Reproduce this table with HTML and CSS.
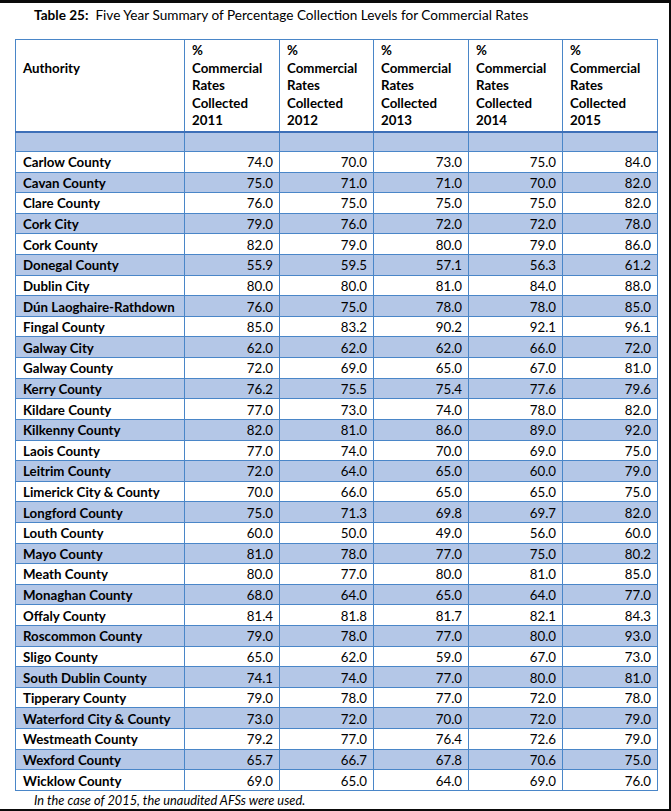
FILE: index.html
```html
<!DOCTYPE html>
<html>
<head>
<meta charset="utf-8">
<link rel="stylesheet" href="styles.css">
</head>
<body>
<div class="page">
  <div class="caption"><b>Table 25:</b>&nbsp; Five Year Summary of Percentage Collection Levels for Commercial Rates</div>
  <table class="rates">
    <colgroup>
      <col class="c-auth"><col class="c-num"><col class="c-num2"><col class="c-num"><col class="c-num2"><col class="c-num">
    </colgroup>
    <thead>
      <tr class="head">
        <th class="auth-h">Authority</th>
        <th>%<br>Commercial<br>Rates<br>Collected<br>2011</th>
        <th>%<br>Commercial<br>Rates<br>Collected<br>2012</th>
        <th>%<br>Commercial<br>Rates<br>Collected<br>2013</th>
        <th>%<br>Commercial<br>Rates<br>Collected<br>2014</th>
        <th>%<br>Commercial<br>Rates<br>Collected<br>2015</th>
      </tr>
    </thead>
    <tbody>
      <tr class="blank alt"><td></td><td></td><td></td><td></td><td></td><td></td></tr>
      <tr><td>Carlow County</td><td>74.0</td><td>70.0</td><td>73.0</td><td>75.0</td><td>84.0</td></tr>
      <tr class="alt"><td>Cavan County</td><td>75.0</td><td>71.0</td><td>71.0</td><td>70.0</td><td>82.0</td></tr>
      <tr><td>Clare County</td><td>76.0</td><td>75.0</td><td>75.0</td><td>75.0</td><td>82.0</td></tr>
      <tr class="alt"><td>Cork City</td><td>79.0</td><td>76.0</td><td>72.0</td><td>72.0</td><td>78.0</td></tr>
      <tr><td>Cork County</td><td>82.0</td><td>79.0</td><td>80.0</td><td>79.0</td><td>86.0</td></tr>
      <tr class="alt"><td>Donegal County</td><td>55.9</td><td>59.5</td><td>57.1</td><td>56.3</td><td>61.2</td></tr>
      <tr><td>Dublin City</td><td>80.0</td><td>80.0</td><td>81.0</td><td>84.0</td><td>88.0</td></tr>
      <tr class="alt"><td>Dún Laoghaire-Rathdown</td><td>76.0</td><td>75.0</td><td>78.0</td><td>78.0</td><td>85.0</td></tr>
      <tr><td>Fingal County</td><td>85.0</td><td>83.2</td><td>90.2</td><td>92.1</td><td>96.1</td></tr>
      <tr class="alt"><td>Galway City</td><td>62.0</td><td>62.0</td><td>62.0</td><td>66.0</td><td>72.0</td></tr>
      <tr><td>Galway County</td><td>72.0</td><td>69.0</td><td>65.0</td><td>67.0</td><td>81.0</td></tr>
      <tr class="alt"><td>Kerry County</td><td>76.2</td><td>75.5</td><td>75.4</td><td>77.6</td><td>79.6</td></tr>
      <tr><td>Kildare County</td><td>77.0</td><td>73.0</td><td>74.0</td><td>78.0</td><td>82.0</td></tr>
      <tr class="alt"><td>Kilkenny County</td><td>82.0</td><td>81.0</td><td>86.0</td><td>89.0</td><td>92.0</td></tr>
      <tr><td>Laois County</td><td>77.0</td><td>74.0</td><td>70.0</td><td>69.0</td><td>75.0</td></tr>
      <tr class="alt"><td>Leitrim County</td><td>72.0</td><td>64.0</td><td>65.0</td><td>60.0</td><td>79.0</td></tr>
      <tr><td>Limerick City &amp; County</td><td>70.0</td><td>66.0</td><td>65.0</td><td>65.0</td><td>75.0</td></tr>
      <tr class="alt"><td>Longford County</td><td>75.0</td><td>71.3</td><td>69.8</td><td>69.7</td><td>82.0</td></tr>
      <tr><td>Louth County</td><td>60.0</td><td>50.0</td><td>49.0</td><td>56.0</td><td>60.0</td></tr>
      <tr class="alt"><td>Mayo County</td><td>81.0</td><td>78.0</td><td>77.0</td><td>75.0</td><td>80.2</td></tr>
      <tr><td>Meath County</td><td>80.0</td><td>77.0</td><td>80.0</td><td>81.0</td><td>85.0</td></tr>
      <tr class="alt"><td>Monaghan County</td><td>68.0</td><td>64.0</td><td>65.0</td><td>64.0</td><td>77.0</td></tr>
      <tr><td>Offaly County</td><td>81.4</td><td>81.8</td><td>81.7</td><td>82.1</td><td>84.3</td></tr>
      <tr class="alt"><td>Roscommon County</td><td>79.0</td><td>78.0</td><td>77.0</td><td>80.0</td><td>93.0</td></tr>
      <tr><td>Sligo County</td><td>65.0</td><td>62.0</td><td>59.0</td><td>67.0</td><td>73.0</td></tr>
      <tr class="alt"><td>South Dublin County</td><td>74.1</td><td>74.0</td><td>77.0</td><td>80.0</td><td>81.0</td></tr>
      <tr><td>Tipperary County</td><td>79.0</td><td>78.0</td><td>77.0</td><td>72.0</td><td>78.0</td></tr>
      <tr class="alt"><td>Waterford City &amp; County</td><td>73.0</td><td>72.0</td><td>70.0</td><td>72.0</td><td>79.0</td></tr>
      <tr><td>Westmeath County</td><td>79.2</td><td>77.0</td><td>76.4</td><td>72.6</td><td>79.0</td></tr>
      <tr class="alt"><td>Wexford County</td><td>65.7</td><td>66.7</td><td>67.8</td><td>70.6</td><td>75.0</td></tr>
      <tr><td>Wicklow County</td><td>69.0</td><td>65.0</td><td>64.0</td><td>69.0</td><td>76.0</td></tr>
    </tbody>
  </table>
  <div class="note">In the case of 2015, the unaudited AFSs were used.</div>
</div>
</body>
</html>
```
FILE: styles.css
```css
html, body {
  margin: 0;
  padding: 0;
  background: #fff;
}
.page {
  box-sizing: border-box;
  width: 671px;
  height: 811px;
  border-top: 3px solid #0a0a0a;
  border-right: 2px solid #0a0a0a;
  border-bottom: 2px solid #0a0a0a;
  font-family: Lato, "Open Sans", sans-serif;
  color: #000;
  overflow: hidden;
}
.caption {
  padding: 3px 0 0 34px;
  height: 36px;
  box-sizing: border-box;
  font-size: 13.6px;
  line-height: 18px;
}
.rates {
  margin-left: 15px;
  border-collapse: collapse;
  table-layout: fixed;
  width: 642px;
  font-size: 13.3px;
}
.c-auth { width: 169px; }
.c-num { width: 95px; }
.c-num2 { width: 94px; }
.rates th, .rates td {
  border: 1px solid #4a86c8;
  padding: 0 6px 0 7px;
}
.rates th {
  text-align: left;
  vertical-align: top;
  font-weight: bold;
  line-height: 17.6px;
  padding-top: 2px;
  padding-bottom: 1px;
  border-bottom: 2px solid #3d6fb8;
}
.rates th.auth-h {
  padding-top: 19.6px;
}
.rates td {
  height: 20.62px;
  box-sizing: border-box;
  text-align: right;
  line-height: 18px;
  padding-top: 1px;
  padding-bottom: 0;
}
.rates td:first-child {
  text-align: left;
  font-weight: bold;
}
.rates tr.alt td {
  background: #b4c7e7;
}
.rates tr.blank td {
  height: 19.5px;
}
.note {
  padding: 1px 0 0 34px;
  font-style: italic;
  font-size: 12.8px;
  line-height: 16px;
}
```
